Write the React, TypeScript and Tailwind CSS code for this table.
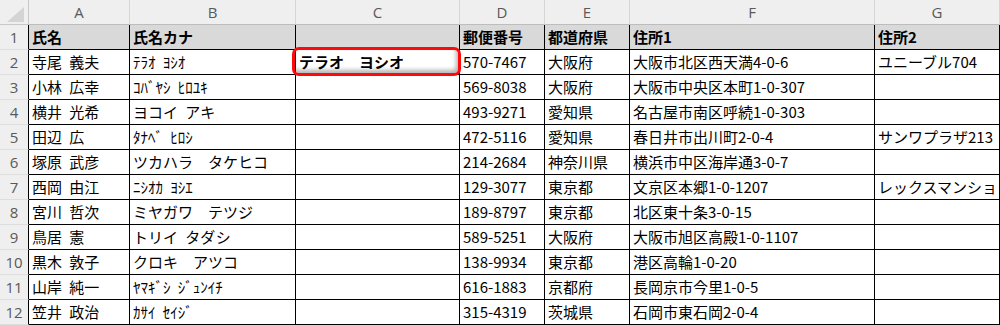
import React from "react";

const COLS = ["A", "B", "C", "D", "E", "F", "G"];

type Row = [string, string, string, string, string, string, string];

const HEAD: Row = ["氏名", "氏名カナ", "", "郵便番号", "都道府県", "住所1", "住所2"];

const ROWS: Row[] = [
  ["寺尾 義夫", "ﾃﾗｵ ﾖｼｵ", "テラオ　ヨシオ", "570-7467", "大阪府", "大阪市北区西天満4-0-6", "ユニーブル704"],
  ["小林 広幸", "ｺﾊﾞﾔｼ ﾋﾛﾕｷ", "", "569-8038", "大阪府", "大阪市中央区本町1-0-307", ""],
  ["横井 光希", "ヨコイ アキ", "", "493-9271", "愛知県", "名古屋市南区呼続1-0-303", ""],
  ["田辺 広", "ﾀﾅﾍﾞ ﾋﾛｼ", "", "472-5116", "愛知県", "春日井市出川町2-0-4", "サンワプラザ213"],
  ["塚原 武彦", "ツカハラ　タケヒコ", "", "214-2684", "神奈川県", "横浜市中区海岸通3-0-7", ""],
  ["西岡 由江", "ﾆｼｵｶ ﾖｼｴ", "", "129-3077", "東京都", "文京区本郷1-0-1207", "レックスマンション"],
  ["宮川 哲次", "ミヤガワ　テツジ", "", "189-8797", "東京都", "北区東十条3-0-15", ""],
  ["鳥居 憲", "トリイ タダシ", "", "589-5251", "大阪府", "大阪市旭区高殿1-0-1107", ""],
  ["黒木 敦子", "クロキ　アツコ", "", "138-9934", "東京都", "港区高輪1-0-20", ""],
  ["山岸 純一", "ﾔﾏｷﾞｼ ｼﾞｭﾝｲﾁ", "", "616-1883", "京都府", "長岡京市今里1-0-5", ""],
  ["笠井 政治", "ｶｻｲ ｾｲｼﾞ", "", "315-4319", "茨城県", "石岡市東石岡2-0-4", ""],
];

const font = { fontFamily: '"Noto Sans CJK JP", "Noto Sans", sans-serif' };
const hdrFont = { fontFamily: '"Open Sans", "Noto Sans", sans-serif' };

export default function App() {
  return (
    <div
      className="w-[1000px] h-[325px] overflow-hidden bg-white text-black [word-spacing:4px]"
      style={font}
    >
      <div className="grid grid-cols-[29px_101px_166px_164px_85px_85px_245px_1fr] grid-rows-[25px_repeat(12,25px)]">
        {/* corner */}
        <div className="bg-[#efefef] border-r border-b border-[#c8c8c8] relative">
          <svg className="absolute left-[7px] top-[7px]" width="17" height="15" viewBox="0 0 17 15">
            <polygon points="17,0 17,15 0,15" fill="#d4d4d4" />
          </svg>
        </div>
        {COLS.map((c) => (
          <div
            key={c}
            className="bg-[#efefef] border-r border-b border-r-[#d6d6d6] border-b-[#bdbdbd] flex items-center justify-center text-[15px] text-[#595959] whitespace-nowrap overflow-hidden"
            style={hdrFont}
          >
            {c}
          </div>
        ))}

        {/* header data row */}
        <div
          className="bg-[#efefef] border-r border-b border-r-black border-b-[#dedede] flex items-center justify-center text-[15px] text-[#595959]"
          style={hdrFont}
        >
          1
        </div>
        {HEAD.map((t, i) => (
          <div
            key={i}
            className="bg-[#d9d9d9] border-r border-b border-black flex items-center pl-[3px] text-[15px] font-bold whitespace-nowrap overflow-hidden"
          >
            {t}
          </div>
        ))}

        {ROWS.map((r, ri) => (
          <React.Fragment key={ri}>
            <div
              className="bg-[#efefef] border-r border-b border-r-black border-b-[#dedede] flex items-center justify-center text-[15px] text-[#595959]"
              style={hdrFont}
            >
              {ri + 2}
            </div>
            {r.map((t, ci) => (
              <div
                key={ci}
                className={
                  "border-r border-b border-black flex items-center pl-[3px] text-[15px] whitespace-nowrap " +
                  (ci === 2 && ri === 0 ? "relative font-bold" : "overflow-hidden")
                }
              >
                {ci === 2 && ri === 0 ? (
                  <>
                    <span>{t}</span>
                    <div className="absolute left-[-4px] top-[-3px] w-[169px] h-[29px] rounded-[7px] border-[3px] border-[#ff0a0a] shadow-[inset_-2px_-3px_4px_rgba(0,0,0,0.3)] pointer-events-none" />
                  </>
                ) : (
                  t
                )}
              </div>
            ))}
          </React.Fragment>
        ))}
      </div>
    </div>
  );
}
